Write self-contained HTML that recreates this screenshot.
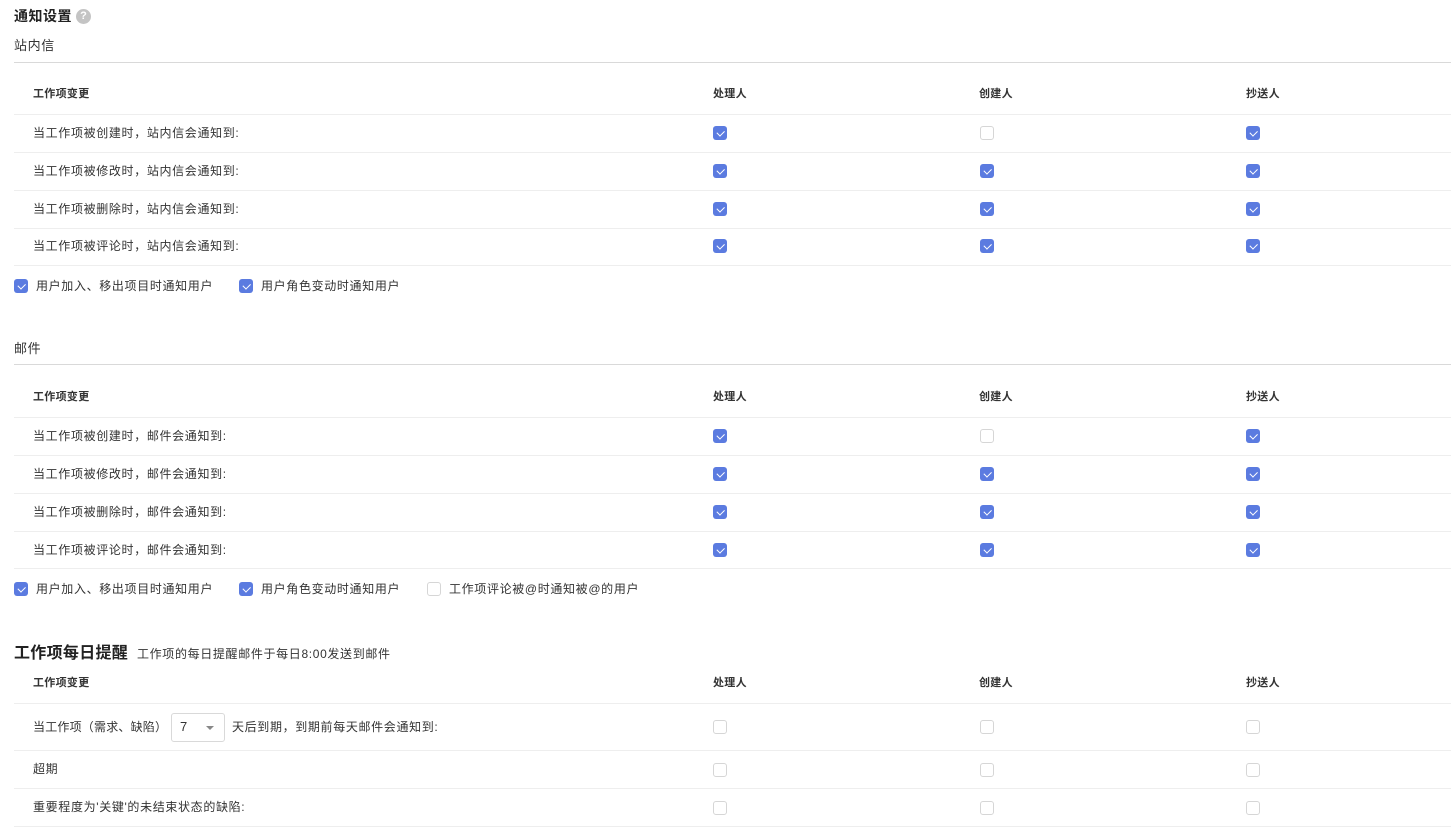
<!DOCTYPE html>
<html><head><meta charset="utf-8"><style>
*{margin:0;padding:0;box-sizing:border-box}
body{width:1451px;height:832px;background:#fff;position:relative;overflow:hidden;font-family:"Liberation Sans","Noto Sans CJK SC",sans-serif;color:#333;font-size:12px;letter-spacing:0.65px}
.a{position:absolute;white-space:nowrap;line-height:16px}
.hl{position:absolute;left:14px;right:0;height:1px;background:#d9d9d9}
.rl{position:absolute;left:14px;right:0;height:1px;background:#eeeeee}
.b{font-weight:bold;font-size:11px;letter-spacing:0.3px}
.c{position:absolute;width:14px;height:14px;border-radius:3px;background:#5b7be0}
.c::after{content:"";position:absolute;left:4px;top:3.5px;width:6px;height:3.5px;border-left:1.7px solid #fff;border-bottom:1.7px solid #fff;transform:rotate(-45deg)}
.u{position:absolute;width:14px;height:14px;border-radius:3px;border:1px solid #d6d6d6;background:#fff}
</style></head><body>
<div class="a" style="left:14px;top:8px;font-size:14px;letter-spacing:0.5px;font-weight:bold;color:#222">通知设置</div>
<div style="position:absolute;left:76px;top:9px;width:15px;height:15px;border-radius:50%;background:#c4c4c4;color:#fff;font-size:11px;font-weight:bold;text-align:center;line-height:15px;letter-spacing:0">?</div>
<div class="a" style="left:14px;top:38px;font-size:13px">站内信</div>
<div class="hl" style="top:62px"></div>
<div class="a b" style="left:33px;top:86px">工作项变更</div>
<div class="a b" style="left:713px;top:86px">处理人</div>
<div class="a b" style="left:979px;top:86px">创建人</div>
<div class="a b" style="left:1246px;top:86px">抄送人</div>
<div class="rl" style="top:114px"></div>
<div class="a" style="left:33px;top:125px">当工作项被创建时，站内信会通知到:</div>
<div class="c" style="left:713px;top:126px"></div><div class="u" style="left:980px;top:126px"></div><div class="c" style="left:1246px;top:126px"></div>
<div class="rl" style="top:152px"></div>
<div class="a" style="left:33px;top:163px">当工作项被修改时，站内信会通知到:</div>
<div class="c" style="left:713px;top:164px"></div><div class="c" style="left:980px;top:164px"></div><div class="c" style="left:1246px;top:164px"></div>
<div class="rl" style="top:190px"></div>
<div class="a" style="left:33px;top:201px">当工作项被删除时，站内信会通知到:</div>
<div class="c" style="left:713px;top:202px"></div><div class="c" style="left:980px;top:202px"></div><div class="c" style="left:1246px;top:202px"></div>
<div class="rl" style="top:228px"></div>
<div class="a" style="left:33px;top:238px">当工作项被评论时，站内信会通知到:</div>
<div class="c" style="left:713px;top:239px"></div><div class="c" style="left:980px;top:239px"></div><div class="c" style="left:1246px;top:239px"></div>
<div class="rl" style="top:265px"></div>
<div class="c" style="left:14px;top:279px"></div><div class="a" style="left:36px;top:278px">用户加入、移出项目时通知用户</div>
<div class="c" style="left:239px;top:279px"></div><div class="a" style="left:261px;top:278px">用户角色变动时通知用户</div>

<div class="a" style="left:14px;top:341px;font-size:13px">邮件</div>
<div class="hl" style="top:364px"></div>
<div class="a b" style="left:33px;top:389px">工作项变更</div>
<div class="a b" style="left:713px;top:389px">处理人</div>
<div class="a b" style="left:979px;top:389px">创建人</div>
<div class="a b" style="left:1246px;top:389px">抄送人</div>
<div class="rl" style="top:417px"></div>
<div class="a" style="left:33px;top:428px">当工作项被创建时，邮件会通知到:</div>
<div class="c" style="left:713px;top:429px"></div><div class="u" style="left:980px;top:429px"></div><div class="c" style="left:1246px;top:429px"></div>
<div class="rl" style="top:455px"></div>
<div class="a" style="left:33px;top:466px">当工作项被修改时，邮件会通知到:</div>
<div class="c" style="left:713px;top:467px"></div><div class="c" style="left:980px;top:467px"></div><div class="c" style="left:1246px;top:467px"></div>
<div class="rl" style="top:493px"></div>
<div class="a" style="left:33px;top:504px">当工作项被删除时，邮件会通知到:</div>
<div class="c" style="left:713px;top:505px"></div><div class="c" style="left:980px;top:505px"></div><div class="c" style="left:1246px;top:505px"></div>
<div class="rl" style="top:531px"></div>
<div class="a" style="left:33px;top:542px">当工作项被评论时，邮件会通知到:</div>
<div class="c" style="left:713px;top:543px"></div><div class="c" style="left:980px;top:543px"></div><div class="c" style="left:1246px;top:543px"></div>
<div class="rl" style="top:568px"></div>
<div class="c" style="left:14px;top:582px"></div><div class="a" style="left:36px;top:581px">用户加入、移出项目时通知用户</div>
<div class="c" style="left:239px;top:582px"></div><div class="a" style="left:261px;top:581px">用户角色变动时通知用户</div>
<div class="u" style="left:427px;top:582px"></div><div class="a" style="left:449px;top:581px">工作项评论被@时通知被@的用户</div>

<div class="a" style="left:14px;top:644px;font-size:16px;letter-spacing:0.3px;font-weight:bold;color:#222;line-height:20px">工作项每日提醒</div>
<div class="a" style="left:137px;top:646px">工作项的每日提醒邮件于每日8:00发送到邮件</div>
<div class="a b" style="left:33px;top:675px">工作项变更</div>
<div class="a b" style="left:713px;top:675px">处理人</div>
<div class="a b" style="left:979px;top:675px">创建人</div>
<div class="a b" style="left:1246px;top:675px">抄送人</div>
<div class="rl" style="top:703px"></div>
<div class="a" style="left:33px;top:719px;letter-spacing:0.2px">当工作项（需求、缺陷）</div>
<div style="position:absolute;left:171px;top:713px;width:54px;height:29px;border:1px solid #d9d9d9;border-radius:3px"></div>
<div class="a" style="left:180px;top:719px;font-size:13px">7</div>
<div style="position:absolute;left:206px;top:726px;width:0;height:0;border-left:4px solid transparent;border-right:4px solid transparent;border-top:4px solid #888"></div>
<div class="a" style="left:232px;top:719px">天后到期，到期前每天邮件会通知到:</div>
<div class="u" style="left:713px;top:720px"></div><div class="u" style="left:980px;top:720px"></div><div class="u" style="left:1246px;top:720px"></div>
<div class="rl" style="top:750px"></div>
<div class="a" style="left:33px;top:761px">超期</div>
<div class="u" style="left:713px;top:763px"></div><div class="u" style="left:980px;top:763px"></div><div class="u" style="left:1246px;top:763px"></div>
<div class="rl" style="top:788px"></div>
<div class="a" style="left:33px;top:799px">重要程度为'关键'的未结束状态的缺陷:</div>
<div class="u" style="left:713px;top:801px"></div><div class="u" style="left:980px;top:801px"></div><div class="u" style="left:1246px;top:801px"></div>
<div class="rl" style="top:826px"></div>
</body></html>
